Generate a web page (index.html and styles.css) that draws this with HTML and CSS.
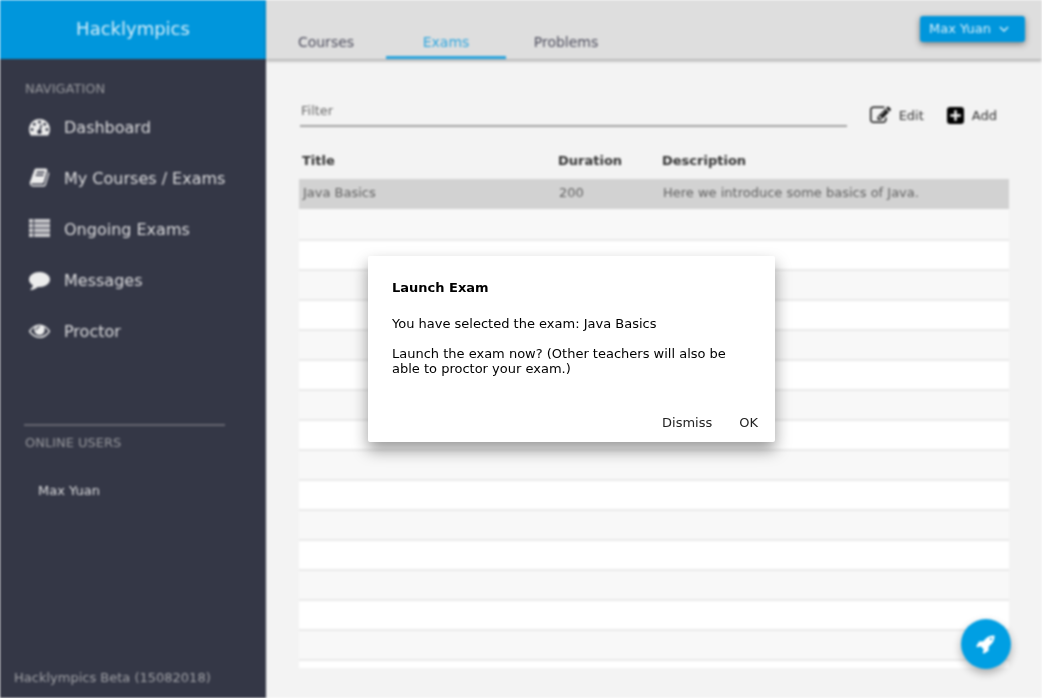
FILE: index.html
```html
<!DOCTYPE html>
<html lang="en">
<head>
<meta charset="utf-8">
<title>Hacklympics</title>
<link rel="stylesheet" href="styles.css">
</head>
<body>
<div class="app">
  <aside class="sidebar">
    <div class="brand">Hacklympics</div>
    <h2 class="section-title">NAVIGATION</h2>
    <nav class="nav">
      <a class="nav-link" href="#"><svg class="icon" viewBox="0 0 1792 1792"><path d="M384 1152q0-53-37.500-90.500t-90.500-37.500-90.500 37.500-37.500 90.500 37.500 90.500 90.500 37.500 90.500-37.500 37.500-90.500zm192-448q0-53-37.500-90.500t-90.500-37.500-90.500 37.500-37.500 90.500 37.500 90.500 90.500 37.500 90.500-37.500 37.500-90.500zm428 481l101-382q6-26-7.500-48.500t-38.500-29.500-48 6.500-30 39.500l-101 382q-60 5-107 43.500t-63 98.500q-20 77 20 146t117 89 146-20 89-117q16-60-6-117t-72-91zm660-33q0-53-37.500-90.500t-90.500-37.500-90.500 37.500-37.500 90.500 37.500 90.500 90.500 37.500 90.500-37.500 37.500-90.500zm-640-640q0-53-37.500-90.500t-90.500-37.500-90.500 37.500-37.500 90.500 37.500 90.500 90.500 37.500 90.500-37.500 37.500-90.500zm448 192q0-53-37.500-90.500t-90.500-37.500-90.500 37.500-37.500 90.500 37.500 90.500 90.500 37.500 90.500-37.500 37.500-90.500zm320 448q0 261-141 483-19 29-54 29h-1402q-35 0-54-29-141-221-141-483 0-182 71-348t191-286 286-191 348-71 348 71 286 191 191 286 71 348z"/></svg>Dashboard</a>
      <a class="nav-link" href="#"><svg class="icon" viewBox="0 0 1792 1792"><path d="M1703 478q40 57 18 129l-275 906q-19 64-76.500 107.500t-122.500 43.500h-923q-77 0-148.500-53.500t-99.500-131.500q-24-67-2-127 0-4 3-27t4-37q1-8-3-21.500t-3-19.500q2-11 8-21t16.500-23.500 16.500-23.500q23-38 45-91.500t30-91.500q3-10 .5-30t-.5-28q3-11 17-28t17-23q21-36 42-92t25-90q1-9-2.500-32t.5-28q4-13 22-30.500t22-22.500q19-26 42.500-84.500t27.500-96.500q1-8-3-25.500t-2-26.500q2-8 9-18t18-23 17-21q8-12 16.500-30.500t15-35 16-36 19.500-32 26.500-23.500 36-11.500 47.500 5.500l-1 3q38-9 51-9h761q74 0 114 56t18 130l-274 906q-36 119-71.500 153.500t-128.500 34.500h-869q-27 0-38 15-11 16-1 43 24 70 144 70h923q29 0 56-15.500t35-41.500l300-987q7-22 5-57 38 15 59 43zm-1064 2q-4 13 2 22.500t20 9.500h608q13 0 25.500-9.500t16.500-22.500l21-64q4-13-2-22.500t-20-9.500h-608q-13 0-25.500 9.500t-16.500 22.500zm-83 256q-4 13 2 22.500t20 9.500h608q13 0 25.500-9.500t16.500-22.500l21-64q4-13-2-22.500t-20-9.500h-608q-13 0-25.500 9.500t-16.500 22.500z"/></svg>My Courses / Exams</a>
      <a class="nav-link" href="#"><svg class="icon list-icon" viewBox="0 0 20 20"><path d="M0 1h4v3.500H0zM5 1h15v3.500H5zM0 5.500h4V9H0zM5 5.500h15V9H5zM0 10h4v3.500H0zM5 10h15v3.500H5zM0 14.500h4V18H0zM5 14.500h15V18H5z"/></svg>Ongoing Exams</a>
      <a class="nav-link" href="#"><svg class="icon" viewBox="0 0 1792 1792"><path d="M1792 896q0 174-120 321.500t-326 233-450 85.500q-70 0-145-8-198 175-460 242-49 14-114 22-17 2-30.500-9t-17.500-29v-1q-3-4-.5-12t2-10 4.500-9.500l6-9 7-8.500 8-9q7-8 31-34.500t34.500-38 31-39.500 32.500-51 27-59 26-76q-157-89-247.500-220t-90.500-281q0-130 71-248.500t191-204.500 286-136.500 348-50.500q244 0 450 85.500t326 233 120 321.500z"/></svg>Messages</a>
      <a class="nav-link" href="#"><svg class="icon" viewBox="0 0 1792 1792"><path d="M1664 960q-152-236-381-353 61 104 61 225 0 185-131.500 316.500t-316.500 131.500-316.500-131.500-131.500-316.500q0-121 61-225-229 117-381 353 133 205 333.500 326.500t434.500 121.500 434.500-121.500 333.500-326.500zm-720-384q0-20-14-34t-34-14q-125 0-214.500 89.500t-89.500 214.500q0 20 14 34t34 14 34-14 14-34q0-86 61-147t147-61q20 0 34-14t14-34zm848 384q0 34-20 69-140 230-376.500 368.500t-499.500 138.500-499.500-139-376.500-368q-20-35-20-69t20-69q140-229 376.500-368t499.500-139 499.500 139 376.500 368q20 35 20 69z"/></svg>Proctor</a>
    </nav>
    <hr class="divider">
    <h2 class="section-title users-title">ONLINE USERS</h2>
    <ul class="users"><li>Max Yuan</li></ul>
    <footer class="version">Hacklympics Beta (15082018)</footer>
  </aside>
  <div class="main">
    <header class="topbar">
      <nav class="tabs">
        <a class="tab" href="#">Courses</a>
        <a class="tab active" href="#">Exams</a>
        <a class="tab" href="#">Problems</a>
      </nav>
      <button class="account" type="button">Max Yuan
        <svg class="chevron" viewBox="0 0 10 10"><path d="M1 3l4 4 4-4"/></svg>
      </button>
    </header>
    <main class="content">
      <div class="toolbar">
        <input class="filter" type="text" placeholder="Filter" aria-label="Filter">
        <button class="tool" type="button"><svg class="icon edit-icon" viewBox="0 0 1792 1792"><path d="M888 1184l116-116-152-152-116 116v56h96v96h56zm440-720q-16-16-33 1l-350 350q-17 17-1 33t33-1l350-350q17-17 1-33zm80 594v190q0 119-84.500 203.500t-203.500 84.500h-832q-119 0-203.500-84.500t-84.500-203.500v-832q0-119 84.500-203.500t203.500-84.500h832q63 0 117 25 15 7 18 23 3 17-9 29l-49 49q-14 14-32 8-23-6-45-6h-832q-66 0-113 47t-47 113v832q0 66 47 113t113 47h832q66 0 113-47t47-113v-126q0-13 9-22l64-64q15-15 35-7t20 29zm-96-738l288 288-672 672h-288v-288zm444 132l-92 92-288-288 92-92q28-28 68-28t68 28l152 152q28 28 28 68t-28 68z"/></svg>Edit</button>
        <button class="tool" type="button"><svg class="icon add-icon" viewBox="0 0 18 18"><path fill-rule="evenodd" d="M3.500 0h11Q18 0 18 3.500v11q0 3.500-3.500 3.500h-11Q0 18 0 14.500v-11Q0 0 3.500 0zM7.700 3.500v4.200H3.500v2.600h4.200v4.200h2.600v-4.200h4.200V7.700h-4.200V3.500z"/></svg>Add</button>
      </div>
      <div class="table-area">
        <table class="exams">
          <thead><tr><th class="col-title">Title</th><th class="col-duration">Duration</th><th>Description</th></tr></thead>
          <tbody>
            <tr class="selected"><td>Java Basics</td><td>200</td><td>Here we introduce some basics of Java.</td></tr>
            <tr><td colspan="3"></td></tr><tr><td colspan="3"></td></tr>
            <tr><td colspan="3"></td></tr><tr><td colspan="3"></td></tr>
            <tr><td colspan="3"></td></tr><tr><td colspan="3"></td></tr>
            <tr><td colspan="3"></td></tr><tr><td colspan="3"></td></tr>
            <tr><td colspan="3"></td></tr><tr><td colspan="3"></td></tr>
            <tr><td colspan="3"></td></tr><tr><td colspan="3"></td></tr>
            <tr><td colspan="3"></td></tr><tr><td colspan="3"></td></tr>
            <tr><td colspan="3"></td></tr><tr><td colspan="3"></td></tr>
          </tbody>
        </table>
      </div>
    </main>
  </div>
  <button class="launch" type="button" aria-label="Launch exam"><svg viewBox="0 0 1792 1792"><path d="M1440 448q0-40-28-68t-68-28-68 28-28 68 28 68 68 28 68-28 28-68zm224-288q0 249-75.500 430.500t-253.500 360.500q-81 80-195 176l-20 379q-2 16-16 26l-384 224q-7 4-16 4-12 0-23-9l-64-64q-13-14-8-32l85-276-281-281-276 85q-3 1-9 1-14 0-23-9l-64-64q-17-19-5-39l224-384q10-14 26-16l379-20q96-114 176-195 188-187 358-258t431-71q14 0 24 9.500t10 22.500z"/></svg></button>
</div>
<div class="overlay">
  <section class="dialog" role="dialog" aria-modal="true" aria-labelledby="dialog-title">
    <h1 class="dialog-title" id="dialog-title">Launch Exam</h1>
    <p>You have selected the exam: Java Basics</p>
    <p>Launch the exam now? (Other teachers will also be able to proctor your exam.)</p>
    <div class="actions">
      <button type="button">Dismiss</button>
      <button type="button">OK</button>
    </div>
  </section>
</div>
</body>
</html>
```
FILE: styles.css
```css
* { box-sizing: border-box; }

body {
  margin: 0;
  background: #fff;
  font: 13px/15px "DejaVu Sans", sans-serif;
  color: #000;
}

button, input { font: inherit; }
button { border: 0; background: none; padding: 0; cursor: pointer; }
a { text-decoration: none; }

.app {
  position: relative;
  display: flex;
  height: 100vh;
  overflow: hidden;
  background: #f3f3f3;
  filter: blur(1px);
}

.sidebar {
  display: flex;
  flex-direction: column;
  flex: 0 0 266px;
  background: #343746;
  color: #dcdcde;
}

.brand {
  display: flex;
  align-items: center;
  justify-content: center;
  height: 59px;
  padding-bottom: 2px;
  background: #0096dc;
  color: #d5eefa;
  font-size: 18px;
}

.section-title {
  margin: 22px 25px 0;
  color: #96979c;
  font-size: 13px;
  font-weight: normal;
}

.nav { padding: 6px 0 0 29px; }

.nav-link {
  display: flex;
  align-items: center;
  gap: 14px;
  height: 51px;
  padding-bottom: 1px;
  color: #dcdcde;
  font-size: 16px;
}

.icon { width: 21px; height: 21px; fill: #ececec; }
.nav-link .icon { margin-bottom: 2px; }
.nav-link .list-icon { fill: #c8c8cc; }

.divider {
  width: 201px;
  height: 2px;
  margin: 67px 0 0 24px;
  border: 0;
  background: #65666f;
}

.users-title { margin-top: 9px; }

.users {
  margin: 33px 0 0;
  padding: 0 0 0 38px;
  list-style: none;
}

.version {
  margin-top: auto;
  padding: 0 14px 13px;
  color: #a0a1a6;
}

.main {
  display: flex;
  flex: 1;
  flex-direction: column;
  min-width: 0;
}

.topbar {
  display: flex;
  align-items: center;
  justify-content: space-between;
  height: 59px;
  padding-right: 17px;
  background: #dedede;
  box-shadow: 0 2px 3px rgba(0, 0, 0, .3);
}

.tabs { display: flex; align-self: stretch; }

.tab {
  display: flex;
  align-items: flex-end;
  justify-content: center;
  width: 120px;
  padding-bottom: 6px;
  border-bottom: 3px solid transparent;
  color: #4c4c5c;
  font-size: 14px;
  line-height: 16px;
}

.tab.active { color: #2ba5de; border-color: #2ba5de; }

.account {
  display: flex;
  align-items: center;
  gap: 8px;
  width: 105px;
  height: 26px;
  margin-bottom: 2px;
  padding-left: 9px;
  border-radius: 3px;
  background: #0096dc;
  box-shadow: 0 2px 6px rgba(0, 0, 0, .45);
  color: #d5eefa;
}

.chevron {
  width: 10px;
  height: 10px;
  fill: none;
  stroke: #d5eefa;
  stroke-width: 1.5;
}

.content {
  display: flex;
  flex: 1;
  flex-direction: column;
  min-height: 0;
  padding: 39px 33px 30px;
}

.toolbar {
  display: flex;
  align-items: center;
  gap: 23px;
  padding-right: 12px;
}

.filter {
  flex: 1;
  min-width: 0;
  height: 28px;
  margin: 0 0 5px 1px;
  padding: 0 0 2px 1px;
  border: 0;
  border-bottom: 2px solid #a2a2a2;
  background: none;
}

.filter::placeholder { color: #6a6a6a; opacity: 1; }

.tool {
  display: flex;
  align-items: center;
  gap: 8px;
  height: 34px;
  color: #333;
}

.tool .icon { fill: #111; }
.tool .add-icon { width: 17px; height: 17px; fill: #000; }

.table-area {
  flex: 1;
  min-height: 0;
  margin-top: 10px;
  overflow: hidden;
}

.exams {
  width: 100%;
  border-collapse: collapse;
  table-layout: fixed;
}

.exams th, .exams td { padding: 0 3px; text-align: left; }
.exams th { height: 37px; color: #333; }
.exams td { height: 30px; padding: 0 4px 3px; color: #606060; background: #f8f8f8; }
.exams tbody tr:nth-child(odd) td { background: #fff; }
.exams tbody tr:nth-child(n + 3) td { box-shadow: inset 0 2px #e9e9e9; }
.exams tbody tr.selected:nth-child(n) td { background: #d2d2d2; }
.col-title { width: 256px; }
.col-duration { width: 104px; }

.launch {
  position: absolute;
  right: 31px;
  bottom: 29px;
  display: flex;
  align-items: center;
  justify-content: center;
  width: 50px;
  height: 50px;
  border-radius: 50%;
  background: #009fe3;
  box-shadow: 0 4px 8px rgba(0, 0, 0, .3);
}

.launch svg { width: 20px; height: 20px; fill: #fff; }

.overlay {
  position: fixed;
  inset: 0;
  display: flex;
  align-items: center;
  justify-content: center;
  padding-left: 101px;
}

.dialog {
  width: 407px;
  padding: 24px 17px 12px 24px;
  border-radius: 2px;
  background: #fff;
  box-shadow: 0 8px 16px rgba(0, 0, 0, .4);
}

.dialog-title { margin: 0 0 21px; font-size: 13px; }
.dialog p { margin: 0 7px 15px 0; }

.actions {
  display: flex;
  justify-content: flex-end;
  gap: 27px;
  margin-top: 39px;
}

.actions button { color: #222; }
```
